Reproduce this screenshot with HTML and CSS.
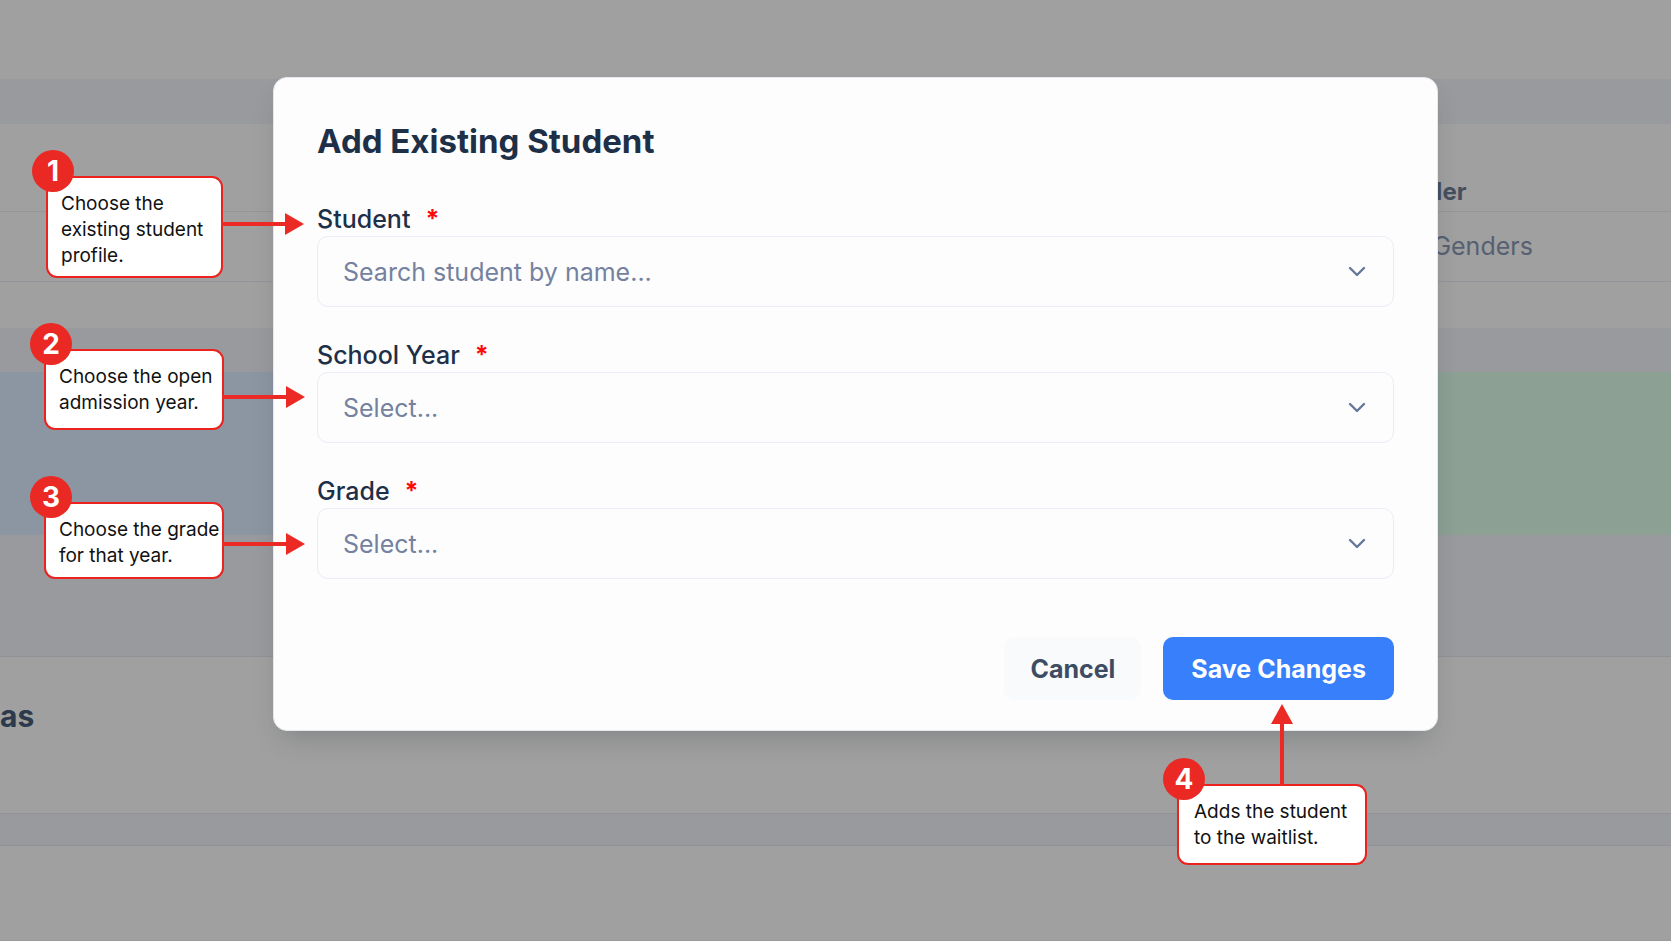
FILE: index.html
```html
<!DOCTYPE html>
<html lang="en">
<head>
<meta charset="utf-8">
<meta name="viewport" content="width=device-width, initial-scale=1">
<title>Add Existing Student</title>
<link rel="stylesheet" href="styles.css">
</head>
<body>
<div class="page" aria-hidden="true">
  <div class="toolbar"></div>
  <div class="filters">
    <div class="filter-head">Gender</div>
    <div class="filter-value">All Genders</div>
  </div>
  <div class="cards">
    <div class="card card-blue"></div>
    <div class="card card-green"></div>
  </div>
  <div class="section"><span class="section-title">as</span></div>
  <div class="section-last"></div>
</div>

<main class="overlay">
  <div class="modal" role="dialog" aria-labelledby="dialog-title">
    <form class="form">
      <h1 class="title" id="dialog-title">Add Existing Student</h1>
      <div class="field">
        <label class="label" for="student">Student <span class="required">*</span></label>
        <div class="control">
          <input class="input" id="student" type="text" placeholder="Search student by name...">
          <svg class="chevron" viewBox="0 0 18 11" aria-hidden="true"><path d="M2 2l7 7 7-7"/></svg>
        </div>
      </div>
      <div class="field">
        <label class="label" for="year">School Year <span class="required">*</span></label>
        <div class="control">
          <select class="input" id="year"><option>Select...</option></select>
          <svg class="chevron" viewBox="0 0 18 11" aria-hidden="true"><path d="M2 2l7 7 7-7"/></svg>
        </div>
      </div>
      <div class="field">
        <label class="label" for="grade">Grade <span class="required">*</span></label>
        <div class="control">
          <select class="input" id="grade"><option>Select...</option></select>
          <svg class="chevron" viewBox="0 0 18 11" aria-hidden="true"><path d="M2 2l7 7 7-7"/></svg>
        </div>
      </div>
      <div class="actions">
        <button class="button cancel" type="button">Cancel</button>
        <button class="button save" type="button">Save Changes</button>
      </div>
    </form>

    <div class="callout callout-student">
      <span class="badge">1</span>Choose the<br>existing student<br>profile.
      <svg class="arrow" viewBox="0 0 83 22" aria-hidden="true"><path d="M0 9h64V0l19 11-19 11V13H0z"/></svg>
    </div>
    <div class="callout callout-year">
      <span class="badge">2</span>Choose the open<br>admission year.
      <svg class="arrow" viewBox="0 0 83 22" aria-hidden="true"><path d="M0 9h64V0l19 11-19 11V13H0z"/></svg>
    </div>
    <div class="callout callout-grade">
      <span class="badge">3</span>Choose the grade<br>for that year.
      <svg class="arrow" viewBox="0 0 83 22" aria-hidden="true"><path d="M0 9h64V0l19 11-19 11V13H0z"/></svg>
    </div>
    <div class="callout callout-save">
      <span class="badge">4</span>Adds the student<br>to the waitlist.
      <svg class="arrow-up" viewBox="0 0 22 82" aria-hidden="true"><path d="M9 82V20H0L11 0l11 20H13v62z"/></svg>
    </div>
  </div>
</main>
</body>
</html>
```
FILE: styles.css
```css
* {
  box-sizing: border-box;
}

body {
  margin: 0;
  background: #a0a0a0;
  font-family: Inter, "Open Sans", sans-serif;
}

/* Dimmed page behind the dialog */
.page {
  min-height: 100vh;
  overflow: hidden;
  background: #999a9d;
}

.toolbar {
  height: 79px;
  background: #a0a0a0;
}

.filters {
  margin-top: 45px;
  padding-bottom: 46px;
  background: #a0a0a0;
}

.filter-head,
.filter-value {
  border-bottom: 1px solid #93959a;
}

.filter-head {
  padding: 48px 0 0 1380px;
  font-size: 24px;
  line-height: 39px;
  font-weight: 700;
  color: #454f5e;
}

.filter-value {
  padding-left: 1396px;
  font-size: 25px;
  line-height: 69px;
  color: #566072;
}

.cards {
  display: flex;
  justify-content: space-between;
  margin: 44px 0 121px;
}

.card {
  width: 40%;
  height: 163px;
}

.card-blue {
  background: #8c96a2;
}

.card-green {
  background: #8da094;
}

.section {
  height: 158px;
  padding-top: 39px;
  border-top: 1px solid #919297;
  border-bottom: 1px solid #919297;
  background: #a0a0a0;
}

.section-title {
  font-size: 30px;
  line-height: 40px;
  font-weight: 700;
  color: #2c3a4b;
}

.section-last {
  height: 95px;
  margin-top: 31px;
  border-top: 1px solid #919297;
  background: #a0a0a0;
}

/* Dialog */
.overlay {
  position: absolute;
  inset: 0;
  padding: 77px 233px 0 273px;
}

.modal {
  position: relative;
  border: 1px solid #e4e8f0;
  border-radius: 14px;
  background: #fdfdfd;
  box-shadow: 0 14px 28px -10px rgba(40, 45, 55, 0.28);
}

.form {
  padding: 42px 43px 30px;
}

.title {
  margin: 0 0 40px;
  font-size: 33px;
  line-height: 42px;
  font-weight: 700;
  color: #1e3048;
}

.field {
  margin-bottom: 31px;
}

.label {
  display: flex;
  gap: 15px;
  font-size: 25px;
  line-height: 34px;
  font-weight: 500;
  color: #1e3048;
}

.required {
  font-weight: 700;
  color: #ff0a0a;
}

.control {
  display: grid;
  align-items: center;
}

.input {
  grid-area: 1 / 1;
  width: 100%;
  height: 71px;
  padding: 0 25px;
  appearance: none;
  border: 1px solid #e9edf7;
  border-radius: 11px;
  background: #fdfdfd;
  font: inherit;
  font-size: 25px;
  color: #7482a0;
}

.input::placeholder {
  color: #7482a0;
  opacity: 1;
}

.chevron {
  grid-area: 1 / 1;
  justify-self: end;
  width: 18px;
  margin-right: 28px;
  fill: none;
  stroke: #64779c;
  stroke-width: 2.4;
  stroke-linecap: round;
  stroke-linejoin: round;
  pointer-events: none;
}

.actions {
  display: flex;
  justify-content: flex-end;
  gap: 22px;
  margin-top: 58px;
}

.button {
  height: 63px;
  border: 0;
  border-radius: 10px;
  font: inherit;
  font-size: 25px;
  font-weight: 700;
}

.cancel {
  padding: 0 26px;
  background: #f9fafc;
  color: #3d4c63;
}

.save {
  padding: 0 28px;
  background: #387ffb;
  color: #fff;
}

/* Numbered annotations pinned over the dialog edges */
.callout {
  position: absolute;
  padding: 13px 13px 12px;
  border: 2px solid #ec221f;
  border-radius: 11px;
  background: #fff;
  font-size: 19px;
  line-height: 26px;
  color: #111;
  white-space: nowrap;
}

.callout-student {
  top: 98px;
  left: -228px;
  width: 177px;
  padding-bottom: 7px;
}

.callout-year {
  top: 271px;
  left: -230px;
  width: 180px;
}

.callout-grade {
  top: 424px;
  left: -230px;
  width: 180px;
  padding-bottom: 8px;
}

.callout-save {
  top: 706px;
  right: 70px;
  width: 190px;
  padding-left: 15px;
}

.badge {
  position: absolute;
  top: -28px;
  left: -16px;
  width: 42px;
  border-radius: 50%;
  background: #ea2824;
  font-size: 28px;
  line-height: 42px;
  font-weight: 700;
  text-align: center;
  color: #fff;
}

.arrow,
.arrow-up {
  position: absolute;
  fill: #ec2a25;
}

.arrow {
  top: 35px;
  left: 100%;
  width: 83px;
}

.callout-grade .arrow {
  top: 29px;
}

.arrow-up {
  bottom: 100%;
  right: 72px;
  width: 22px;
}
```
